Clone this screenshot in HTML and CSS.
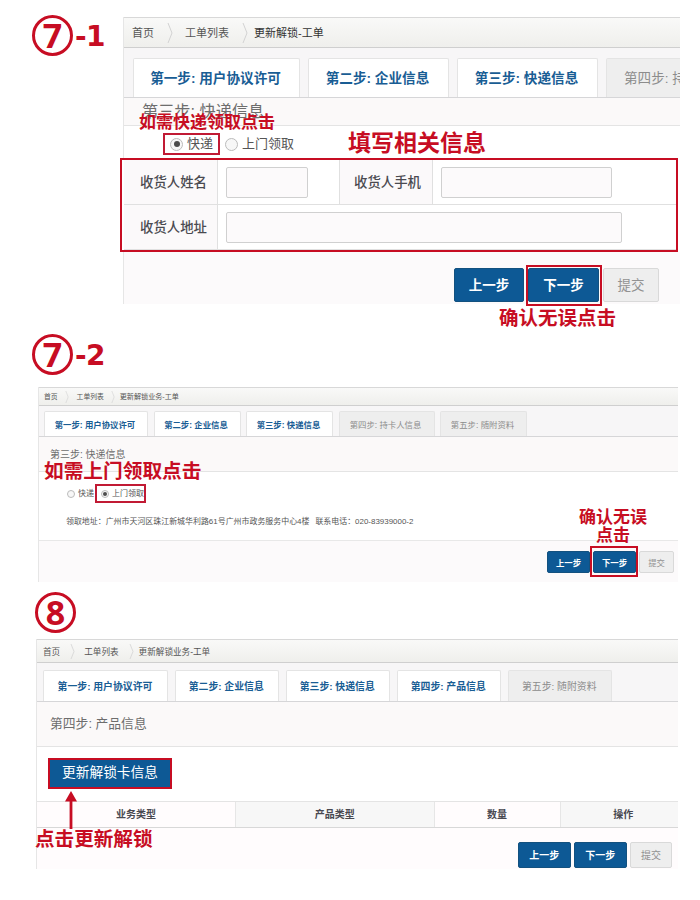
FILE: index.html
```html
<!DOCTYPE html>
<html lang="zh-CN">
<head>
<meta charset="utf-8">
<title>更新解锁-工单</title>
<link rel="stylesheet" href="styles.css">
</head>
<body>
<section class="step step-a">
  <div class="badge"><span class="ring">7</span><span class="suffix">-1</span></div>
  <div class="panel panel-a">
    <nav class="crumbs">
      <span class="crumb">首页</span><svg class="chev" viewBox="0 0 6 20"><path d="M1 0 5 10 1 20"/></svg>
      <span class="crumb">工单列表</span><svg class="chev" viewBox="0 0 6 20"><path d="M1 0 5 10 1 20"/></svg>
      <span class="crumb current">更新解锁-工单</span>
    </nav>
    <div class="tabs">
      <div class="tab wide">第一步: 用户协议许可</div>
      <div class="tab">第二步: 企业信息</div>
      <div class="tab">第三步: 快递信息</div>
      <div class="tab off cut">第四步: 持卡人信息</div>
    </div>
    <h2 class="title">第三步: 快递信息</h2>
    <div class="radios">
      <label class="choice marked"><i class="dot on"></i>快递</label>
      <label class="choice"><i class="dot"></i>上门领取</label>
    </div>
    <div class="form">
      <div class="row">
        <div class="label">收货人姓名</div>
        <div class="cell name"><div class="input"></div></div>
        <div class="label second">收货人手机</div>
        <div class="cell phone"><div class="input"></div></div>
      </div>
      <div class="row last">
        <div class="label">收货人地址</div>
        <div class="cell address"><div class="input"></div></div>
      </div>
    </div>
    <div class="footer">
      <div class="btn">上一步</div>
      <div class="btn ringed">下一步</div>
      <div class="btn disabled">提交</div>
    </div>
  </div>
  <p class="note note-express">如需快递领取点击</p>
  <p class="note note-fill">填写相关信息</p>
  <p class="note note-confirm">确认无误点击</p>
</section>

<section class="step step-b">
  <div class="badge"><span class="ring">7</span><span class="suffix">-2</span></div>
  <div class="panel panel-b">
    <nav class="crumbs">
      <span class="crumb">首页</span><svg class="chev" viewBox="0 0 6 20"><path d="M1 0 5 10 1 20"/></svg>
      <span class="crumb">工单列表</span><svg class="chev" viewBox="0 0 6 20"><path d="M1 0 5 10 1 20"/></svg>
      <span class="crumb last">更新解锁业务-工单</span>
    </nav>
    <div class="tabs">
      <div class="tab wide">第一步: 用户协议许可</div>
      <div class="tab">第二步: 企业信息</div>
      <div class="tab">第三步: 快递信息</div>
      <div class="tab off four">第四步: 持卡人信息</div>
      <div class="tab off">第五步: 随附资料</div>
    </div>
    <h2 class="title">第三步: 快递信息</h2>
    <div class="pickup">
      <div class="radios">
        <label class="choice"><i class="dot"></i>快递</label>
        <label class="choice marked"><i class="dot on"></i>上门领取</label>
      </div>
      <div class="where"><span>领取地址：广州市天河区珠江新城华利路61号广州市政务服务中心4楼</span><span>联系电话：020-83939000-2</span></div>
    </div>
    <div class="footer">
      <div class="btn">上一步</div>
      <div class="btn ringed">下一步</div>
      <div class="btn disabled">提交</div>
    </div>
  </div>
  <p class="note note-door">如需上门领取点击</p>
  <p class="note note-confirm2">确认无误<br>点击</p>
</section>

<section class="step step-c">
  <div class="badge"><span class="ring">8</span></div>
  <div class="panel panel-c">
    <nav class="crumbs">
      <span class="crumb">首页</span><svg class="chev" viewBox="0 0 6 20"><path d="M1 0 5 10 1 20"/></svg>
      <span class="crumb">工单列表</span><svg class="chev" viewBox="0 0 6 20"><path d="M1 0 5 10 1 20"/></svg>
      <span class="crumb last">更新解锁业务-工单</span>
    </nav>
    <div class="tabs">
      <div class="tab wide">第一步: 用户协议许可</div>
      <div class="tab">第二步: 企业信息</div>
      <div class="tab">第三步: 快递信息</div>
      <div class="tab">第四步: 产品信息</div>
      <div class="tab off">第五步: 随附资料</div>
    </div>
    <h2 class="title">第四步: 产品信息</h2>
    <div class="action"><div class="unlock">更新解锁卡信息</div></div>
    <div class="thead">
      <div class="th">业务类型</div><div class="th">产品类型</div><div class="th">数量</div><div class="th">操作</div>
    </div>
    <div class="footer">
      <div class="btn">上一步</div>
      <div class="btn">下一步</div>
      <div class="btn disabled">提交</div>
    </div>
  </div>
  <svg class="arrow" viewBox="0 0 12 38"><path d="M6 0 12 10.5H7.4V38H4.6V10.5H0Z"/></svg>
  <p class="note note-unlock">点击更新解锁</p>
</section>
</body>
</html>
```

FILE: styles.css
```css
* { box-sizing: border-box; }
body {
  margin: 0;
  width: 700px;
  height: 900px;
  overflow: hidden;
  background: #fff;
  font-family: "Liberation Sans", "Noto Sans CJK SC", sans-serif;
  color: #555;
}
.step { position: relative; }
.step-a { display: flex; height: 330px; padding: 15px 0 0 32px; }
.step-b { height: 260px; padding: 4px 0 0 32px; }
.step-c { height: 310px; padding: 2px 0 0 35px; }

/* Step numbers */
.badge {
  display: flex;
  height: 41px;
  color: #c70d23;
  font-family: "Open Sans", sans-serif;
  font-weight: 700;
}
.step-a .badge { width: 91px; flex: none; }
.ring {
  width: 41px;
  height: 41px;
  border: 3px solid #c70d23;
  border-radius: 50%;
  font-size: 34px;
  line-height: 35px;
  text-align: center;
}
.suffix { margin-left: 2px; font-family: "DejaVu Sans", sans-serif; font-size: 28px; line-height: 43px; letter-spacing: -0.5px; }

/* Panels */
.panel {
  display: flex;
  flex-direction: column;
  border-left: 1px solid #e6e6e6;
  background: #fff;
  white-space: nowrap;
}
.panel-a { width: 557px; height: 287px; margin-top: 2px; }
.panel-b { width: 640px; height: 195px; margin: 12px 0 0 6px; }
.panel-c { width: 642px; height: 230px; margin: 6px 0 0 1px; }

.crumbs {
  display: flex;
  align-items: center;
  flex: none;
  border-top: 1px solid #d8d8d8;
  border-bottom: 1px solid #cfcfcf;
  background: linear-gradient(#f9f9f8, #efefec);
  color: #555;
}
.crumb { padding-bottom: 1px; }
.chev { flex: none; fill: none; stroke: #d2d2d2; stroke-width: 1; }
.current { color: #333; }
.panel-a .crumbs { height: 31px; padding-left: 8px; font-size: 11px; }
.panel-a .chev { width: 6px; height: 20px; margin: 0 12px 0 13px; }
.panel-a .current { margin-left: -6px; }
.panel-b .crumbs { height: 19px; padding-left: 5px; font-size: 6.8px; }
.panel-b .chev { width: 4px; height: 12px; margin: 0 8px 0 7px; }
.panel-b .last { margin-left: -3px; font-size: 7.1px; }
.panel-c .crumbs { height: 24px; padding-left: 6px; font-size: 8.6px; }
.panel-c .chev { width: 5px; height: 15px; margin: 0 9px 0 10px; }
.panel-c .last { margin-left: -4px; }

.tabs {
  display: flex;
  align-items: flex-end;
  flex: none;
  overflow: hidden;
  border-bottom: 1px solid #d6d6d8;
  background: #f7f6f7;
}
.tab {
  display: flex;
  flex: none;
  justify-content: center;
  align-items: center;
  border: 1px solid #e4e4e4;
  border-bottom: 0;
  border-radius: 2px 2px 0 0;
  background: #fff;
  color: #195d94;
  font-weight: 700;
}
.tab.off { background: #eee; color: #8c8c8c; font-weight: 400; }
.panel-a .tabs { height: 50px; padding-left: 9px; gap: 8px; font-size: 13.6px; }
.panel-a .tab { width: 141px; height: 39px; padding: 0 2px 3px 0; }
.panel-a .wide { width: 167px; }
.panel-a .cut { justify-content: flex-start; padding-left: 17px; }
.panel-b .tabs { height: 31px; padding-left: 5px; gap: 5.5px; font-size: 8.4px; }
.panel-b .tab { width: 87px; height: 25px; padding-right: 2px; }
.panel-b .wide { width: 104px; }
.panel-b .four { width: 96px; }
.panel-c .tabs { height: 39px; padding-left: 6px; gap: 6.5px; font-size: 9.9px; }
.panel-c .tab { width: 104.5px; height: 31px; padding-right: 1px; }
.panel-c .wide { width: 125px; }

.title {
  flex: none;
  margin: 0;
  border-bottom: 1px solid #e4e4e4;
  background: #fbf9f9;
  color: #6d6d6d;
  font-weight: 400;
}
.panel-a .title { height: 28px; padding-left: 18px; font-size: 16.2px; line-height: 26px; }
.panel-b .title { height: 35px; padding-left: 11px; font-size: 10px; line-height: 35px; }
.panel-c .title { height: 45px; padding-left: 13px; font-size: 12.8px; line-height: 44px; }

/* Radio choices */
.radios { display: flex; align-items: center; flex: none; }
.choice { display: flex; align-items: center; }
.marked { border: 2px solid #c11a34; }
.dot {
  display: flex;
  align-items: center;
  justify-content: center;
  border: 1px solid #bbb;
  border-radius: 50%;
  background: #f7f7f7;
}
.dot.on::after { content: ""; border-radius: 50%; background: #4c4c4c; }
.panel-a .radios { height: 32px; padding: 4px 0 0 39px; gap: 5px; font-size: 13px; line-height: 16px; }
.panel-a .choice { height: 22px; gap: 4px; }
.panel-a .marked { width: 57px; padding-left: 5px; }
.panel-a .dot { width: 13px; height: 13px; }
.panel-a .dot.on::after { width: 6px; height: 6px; }
.panel-b .radios { height: 19px; padding-left: 28px; gap: 1px; font-size: 8px; line-height: 10px; }
.panel-b .choice { height: 19px; gap: 3px; }
.panel-b .marked { width: 51px; padding-left: 4px; }
.panel-b .dot { width: 8px; height: 8px; }
.panel-b .dot.on::after { width: 4px; height: 4px; }

/* Recipient form */
.form {
  flex: none;
  width: 558px;
  height: 94px;
  margin-left: -4px;
  border: 2px solid #c70d23;
  padding-left: 2px;
  background: #fff;
}
.row { display: flex; height: 45px; border-bottom: 1px solid #e0e0e0; }
.label {
  display: flex;
  align-items: center;
  justify-content: center;
  width: 94px;
  padding: 0 0 3px 6px;
  border-right: 1px solid #e0e0e0;
  background: #fbf9fa;
  color: #4a4a50;
  font-size: 13.4px;
  font-weight: 500;
}
.second { padding-left: 3px; border-left: 1px solid #e0e0e0; }
.cell { display: flex; align-items: center; padding-left: 8px; }
.name { width: 121px; }
.input { width: 82px; height: 31px; border: 1px solid #d0d0d0; border-radius: 2px; background: #fcfafb; }
.phone .input { width: 171px; }
.address .input { width: 396px; }

/* Pick-up details */
.pickup { flex: none; height: 69px; padding-top: 12px; border-bottom: 1px solid #e8e8e8; }
.where { display: flex; gap: 6px; margin-top: 10px; padding-left: 27px; font-size: 7.95px; line-height: 17px; color: #555; }

/* Product table */
.action { flex: none; height: 54px; padding: 11px 0 0 11px; }
.unlock {
  width: 124px;
  height: 31px;
  border: 2px solid #c70d23;
  background: #0d5995;
  color: #fff;
  font-size: 13.7px;
  line-height: 26px;
  text-align: center;
}
.thead {
  display: grid;
  grid-template-columns: 199px 198.5px 126px 1fr;
  flex: none;
  height: 27px;
  border-top: 1px solid #e4e4e4;
  border-bottom: 1px solid #d8d8d8;
}
.th {
  border-right: 1px solid #e6e6e6;
  background: #fffcfd;
  color: #484850;
  font-size: 10px;
  font-weight: 700;
  line-height: 25px;
  text-align: center;
}
.th:nth-child(even) { background: #f7f7f7; }
.th:last-child { border-right: 0; padding-left: 8px; }

/* Footer buttons */
.footer { display: flex; flex: 1; justify-content: flex-end; background: #fcfafb; }
.panel-c .footer { background: #fffcfd; }
.btn {
  display: flex;
  position: relative;
  align-items: center;
  justify-content: center;
  border: 1px solid #13517f;
  border-radius: 2px;
  background: #0d5995;
  color: #fff;
  font-weight: 700;
}
.btn.disabled { border-color: #d9d9d9; background: #eee; color: #929292; font-weight: 400; }
.ringed::after { content: ""; position: absolute; inset: -4px; border: 2px solid #c70d23; }
.panel-a .footer { padding: 16px 21px 0 0; gap: 4px; font-size: 13.5px; }
.panel-a .btn { width: 70px; height: 34px; padding-bottom: 3px; }
.panel-a .ringed { width: 71px; }
.panel-a .ringed::after { inset: -4px -4px -5px -3px; }
.panel-a .disabled { width: 56px; }
.panel-b .footer { padding: 10px 4px 0 0; gap: 3px; font-size: 8.4px; }
.panel-b .btn { width: 43px; height: 22px; padding-bottom: 1px; }
.panel-b .ringed::after { inset: -6px -3px -5px -4px; }
.panel-b .disabled { width: 35px; }
.panel-c .footer { padding: 14px 6px 0 0; gap: 3.5px; font-size: 10px; }
.panel-c .btn { width: 52.5px; height: 26px; padding-bottom: 1px; }
.panel-c .disabled { width: 42px; }

/* Red notes laid over the panels */
.note {
  position: absolute;
  margin: 0;
  color: #c70d23;
  font-family: "Noto Sans CJK SC", sans-serif;
  font-weight: 700;
  line-height: 20px;
  white-space: nowrap;
  text-align: center;
}
.note-express { left: 139px; top: 111px; font-size: 17px; }
.note-fill { left: 348px; top: 131px; font-size: 23px; }
.note-confirm { left: 499px; top: 307px; font-size: 19.5px; }
.note-door { left: 44px; top: 130px; font-size: 19.7px; }
.note-confirm2 { left: 579px; top: 177px; font-size: 17px; line-height: 18px; }
.note-unlock { left: 35px; top: 238px; font-size: 19.6px; }
.arrow { position: absolute; left: 65px; top: 201px; width: 12px; height: 38px; fill: #c70d23; }
```
